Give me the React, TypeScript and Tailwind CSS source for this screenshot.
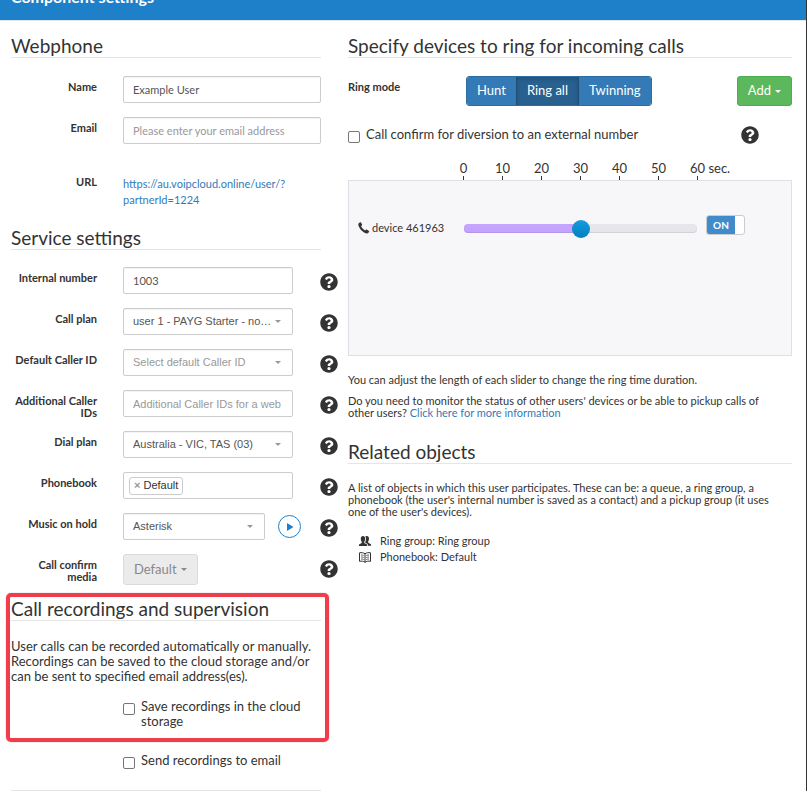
import type { ReactNode } from "react";
import { FaQuestionCircle } from "react-icons/fa";

const ticks = ["0", "10", "20", "30", "40", "50"];

function SectionTitle({ children }: { children: ReactNode }) {
  return (
    <h2 className="border-b border-[#e5e5e5] text-[19px] leading-[22px]">
      {children}
    </h2>
  );
}

function Help({ topic }: { topic: string }) {
  return (
    <button type="button" aria-label={"Help: " + topic} className="shrink-0">
      <FaQuestionCircle className="size-[18px]" />
    </button>
  );
}

function Caret({ className }: { className?: string }) {
  return (
    <svg viewBox="0 0 6 3" className={"h-[3px] w-[6px] " + (className ?? "")} aria-hidden="true">
      <path d="M0 0h6L3 3z" fill="currentColor" />
    </svg>
  );
}

type FieldProps = {
  id: string;
  label: string;
  help?: boolean;
  children: ReactNode;
};

function Field({ id, label, help, children }: FieldProps) {
  return (
    <div className="flex min-h-[41px] items-start">
      <label htmlFor={id} className="w-[86px] shrink-0 pt-[5px] text-right text-[11px] leading-3 font-bold">
        {label}
      </label>
      <div className="ml-[26px] flex flex-1 items-center">{children}</div>
      {help ? (
        <div className="ml-[27px] flex pt-[6px]">
          <Help topic={label} />
        </div>
      ) : (
        <div className="w-[17px]" />
      )}
    </div>
  );
}

const inputStyle =
  "h-[27px] w-full min-w-0 rounded-[2px] border border-[#ccc] bg-white px-[9px] text-[11px] text-[#555] placeholder:text-[#999] shadow-[inset_0_1px_1px_rgba(0,0,0,0.05)]";
const arial = "font-['Liberation_Sans',Arial,sans-serif]";

type SelectProps = { id: string; value: string; muted?: boolean };

function Select({ id, value, muted }: SelectProps) {
  return (
    <div className="relative min-w-0 flex-1">
      <select id={id} className={inputStyle + " " + arial + " block appearance-none " + (muted ? "text-[#999]!" : "")}>
        <option>{value}</option>
      </select>
      <Caret className="pointer-events-none absolute top-3 right-3 text-[#999]" />
    </div>
  );
}

function PhoneIcon() {
  return (
    <svg viewBox="0 0 12 12" className="size-3 shrink-0" aria-hidden="true">
      <path
        d="M1 1 2.200.3c.3-.1.6 0 .8.3l1.100 2c.1.300 0 .6-.2.8l-.9.6c.7 1.700 2.300 3.500 4.100 4.500l.8-.8c.2-.2.5-.3.8-.1l2.200 1.300c.3.2.4.5.2.8l-.7 1.100c-.4.6-1.100.9-1.900.7C4.900 10.500 1 6.700.3 2.800.2 2 .400 1.400 1 1z"
        fill="currentColor"
      />
    </svg>
  );
}

function GroupIcon() {
  return (
    <svg viewBox="0 0 12 10" className="h-[10px] w-3" fill="currentColor" aria-hidden="true">
      <path d="M0 10V8.500L2.700 7V5.500C2 4.900 1.800 4 1.800 2.800 1.800 1 2.600 0 4 0s2.200 1 2.200 2.800c0 1.200-.3 2.100-.9 2.700V7L8 8.500V10z" />
      <path d="M6.300 5.800c.4-.700.700-1.700.700-3C7 1.800 6.800 1 6.400.4 6.800.1 7.300 0 7.800 0 9.200 0 10 1 10 2.700c0 1.100-.3 2-.8 2.600v1.400L12 8.200v1.600H8.700V8L6.300 6.700z" />
    </svg>
  );
}

function BookIcon() {
  return (
    <svg viewBox="0 0 12 11" className="h-[11px] w-3" fill="none" stroke="currentColor" aria-hidden="true">
      <path d="M6 1.800C4.700.7 2.500.4.500.8v8.500c2-.4 4.200-.1 5.500 1 1.300-1.100 3.500-1.400 5.500-1V.8C9.500.4 7.300.7 6 1.800zM6 1.800v8.400" />
      <path
        strokeWidth="0.8"
        d="M2 3c1 0 2 .1 2.700.6M2 5c1 0 2 .1 2.700.6M2 7c1 0 2 .1 2.700.6M10 3c-1 0-2 .1-2.700.6M10 5c-1 0-2 .1-2.700.6M10 7c-1 0-2 .1-2.700.6"
      />
    </svg>
  );
}

const checkStyle =
  "size-3 shrink-0 appearance-none rounded-[2px] border border-[#767676] bg-white checked:bg-[#337ab7]";

function LeftColumn() {
  return (
    <div>
      <div className="pr-[17px]">
        <SectionTitle>Webphone</SectionTitle>
      </div>
      <div className="pt-[18px]">
        <Field id="name" label="Name">
          <input id="name" defaultValue="Example User" className={inputStyle} />
        </Field>
        <Field id="email" label="Email">
          <input id="email" type="email" placeholder="Please enter your email address" className={inputStyle} />
        </Field>
      </div>
      <div className="flex pt-[18px]">
        <p className="w-[86px] text-right text-[11px] leading-3 font-bold">URL</p>
        <a href="#url" className="ml-[26px] text-[11px] leading-4 text-[#337ab7]">
          https://au.voipcloud.online/user/?
          <br />
          partnerId=1224
        </a>
      </div>

      <div className="pt-[19px] pr-[17px]">
        <SectionTitle>Service settings</SectionTitle>
      </div>
      <div className="pt-[17px]">
        <Field id="number" label="Internal number" help>
          <input id="number" defaultValue="1003" className={inputStyle} />
        </Field>
        <Field id="plan" label="Call plan" help>
          <Select id="plan" value="user 1 - PAYG Starter - no…" />
        </Field>
        <Field id="caller" label="Default Caller ID" help>
          <Select id="caller" value="Select default Caller ID" muted />
        </Field>
        <Field id="callers" label="Additional Caller IDs" help>
          <input id="callers" placeholder="Additional Caller IDs for a web" className={inputStyle + " " + arial} />
        </Field>
        <Field id="dial" label="Dial plan" help>
          <Select id="dial" value="Australia - VIC, TAS (03)" />
        </Field>
        <Field id="phonebook" label="Phonebook" help>
          <div className="flex h-[27px] w-full items-center rounded-[2px] border border-[#ccc] px-[5px]">
            <span className={"flex h-[18px] shrink-0 items-center gap-[3px] rounded-[3px] border border-[#ccc] px-1 text-[11px] text-[#333] " + arial}>
              <button type="button" aria-label="Remove Default" className="font-bold text-[#999]">×</button>
              Default
            </span>
            <input id="phonebook" className="w-full min-w-0 outline-none" />
          </div>
        </Field>
        <Field id="music" label="Music on hold" help>
          <Select id="music" value="Asterisk" />
          <button
            type="button"
            aria-label="Play"
            className="-mr-2 ml-[13px] flex size-[23px] shrink-0 items-center justify-center rounded-full border border-[#1e80c9] text-[#1e80c9]"
          >
            <svg viewBox="0 0 8 8" className="size-2" aria-hidden="true">
              <path d="M1 0l6.500 4L1 8z" fill="currentColor" />
            </svg>
          </button>
        </Field>
        <Field id="media" label="Call confirm media" help>
          <button
            id="media"
            type="button"
            disabled
            className="flex h-[31px] items-center gap-1 rounded-[3px] border border-[#dbdbdb] bg-[#ebebeb] px-[10px] text-[13px] text-[#888]"
          >
            Default
            <Caret />
          </button>
        </Field>
      </div>

      <section className="relative pt-[3px] pr-[17px]">
        <div className="pointer-events-none absolute top-[-2px] right-[9px] bottom-[-1px] left-[-5px] rounded-[5px] border-4 border-[#f03c4b] shadow-[0_0_1px_#777]" />
        <SectionTitle>Call recordings and supervision</SectionTitle>
        <p className="pt-[18px] text-[13px] leading-[15px]">
          User calls can be recorded automatically or manually. Recordings can be saved to the cloud storage and/or can be
          sent to specified email address(es).
        </p>
        <label className="ml-[112px] flex gap-[6px] pt-[15px] pb-3 text-[13px] leading-[15px]">
          <input type="checkbox" className={checkStyle + " mt-1"} />
          Save recordings in the cloud storage
        </label>
      </section>
      <label className="ml-[112px] flex gap-[6px] pt-3 text-[13px] leading-[15px]">
        <input type="checkbox" className={checkStyle + " mt-1"} />
        Send recordings to email
      </label>
      <hr className="mt-[21px] mr-[17px] border-[#e5e5e5]" />
    </div>
  );
}

function RightColumn() {
  return (
    <div className="min-w-0">
      <SectionTitle>Specify devices to ring for incoming calls</SectionTitle>
      <div className="flex items-start pt-[18px]">
        <p className="w-[118px] pt-[5px] text-[11px] leading-3 font-bold">Ring mode</p>
        <div className="flex h-[30px] overflow-hidden rounded-[3px] border border-[#2e6da4] text-[13px] text-white">
          <button type="button" className="bg-[#337ab7] px-[10px]">Hunt</button>
          <button type="button" className="border-x border-[#204d74] bg-[#286090] px-[10px] shadow-[inset_0_2px_4px_rgba(0,0,0,0.15)]">
            Ring all
          </button>
          <button type="button" className="bg-[#337ab7] px-[10px]">Twinning</button>
        </div>
        <button
          type="button"
          className="ml-auto flex h-[30px] items-center gap-1 rounded-[3px] border border-[#4cae4c] bg-[#5cb85c] px-[10px] text-[13px] text-white"
        >
          Add
          <Caret />
        </button>
      </div>

      <div className="flex items-center pt-5 pr-[33px]">
        <label className="flex flex-1 items-start gap-[6px] text-[13px] leading-[15px]">
          <input type="checkbox" className={checkStyle + " mt-1"} />
          Call confirm for diversion to an external number
        </label>
        <Help topic="Call confirm" />
      </div>

      <div className="ml-24 flex pt-4 text-[13px] leading-4">
        {ticks.map((tick) => (
          <div key={tick} className="flex w-[39px] flex-col items-center">
            {tick}
            <i className="h-1 w-px bg-[#333]" />
          </div>
        ))}
        <div className="pl-3 whitespace-nowrap">
          60 sec.
          <i className="ml-[7px] block h-1 w-px bg-[#333]" />
        </div>
      </div>
      <div className="flex min-h-[176px] items-start border border-[#dfdfe6] bg-[#f7f7f9] pt-[34px] pl-[9px]">
        <div className="flex h-[26px] w-[106px] items-center gap-[2px] text-[11px]">
          <PhoneIcon />
          <label htmlFor="ring-time">device 461963</label>
        </div>
        <input
          id="ring-time"
          type="range"
          min={0}
          max={60}
          defaultValue={30}
          className="mt-[9px] h-[9px] w-[233px] appearance-none rounded-[4px] bg-linear-to-r from-[#c4a4ff] from-50% to-[#e7e6ec] to-50% shadow-[inset_0_-1px_1px_rgba(0,0,0,0.1)] [&::-webkit-slider-thumb]:size-[18px] [&::-webkit-slider-thumb]:appearance-none [&::-webkit-slider-thumb]:rounded-full [&::-webkit-slider-thumb]:bg-linear-to-b [&::-webkit-slider-thumb]:from-[#149bdf] [&::-webkit-slider-thumb]:to-[#0480be]"
        />
        <label className="ml-[9px] flex h-5 w-[39px] cursor-pointer overflow-hidden rounded-[3px] border border-[#ccc] bg-white">
          <input type="checkbox" defaultChecked className="sr-only" />
          <span className="w-7 bg-[#428bca] text-center text-[10px] leading-[18px] font-bold text-white">ON</span>
        </label>
      </div>

      <p className="pt-[18px] text-[11px] leading-3">
        You can adjust the length of each slider to change the ring time duration.
      </p>
      <p className="pt-[9px] pr-3 text-[11px] leading-3">
        Do you need to monitor the status of other users' devices or be able to pickup calls of other users?{" "}
        <a href="#more" className="text-[#337ab7]">Click here for more information</a>
      </p>

      <div className="pt-[22px]">
        <SectionTitle>Related objects</SectionTitle>
      </div>
      <p className="pt-[18px] pr-3 text-[11px] leading-3">
        A list of objects in which this user participates. These can be: a queue, a ring group, a phonebook (the user's
        internal number is saved as a contact) and a pickup group (it uses one of the user's devices).
      </p>
      <ul className="pt-[15px] pl-[11px] text-[11px] leading-4">
        <li className="flex items-center gap-[9px]">
          <GroupIcon />
          Ring group: Ring group
        </li>
        <li className="flex items-center gap-[9px]">
          <BookIcon />
          Phonebook: Default
        </li>
      </ul>
    </div>
  );
}

export default function App() {
  return (
    <div className="border-r border-[#333] bg-white font-[Lato,sans-serif] text-[#333]">
      <header className="flex h-[21px] items-end overflow-hidden border-b border-[#e5e5e5] bg-[#1e80c9] px-[11px] pb-[13px] text-base leading-5 font-bold text-white">
        <h1>Component settings</h1>
      </header>
      <main className="grid grid-cols-[327px_1fr] gap-[10px] pt-[14px] pr-[14px] pl-[11px]">
        <LeftColumn />
        <RightColumn />
      </main>
    </div>
  );
}
